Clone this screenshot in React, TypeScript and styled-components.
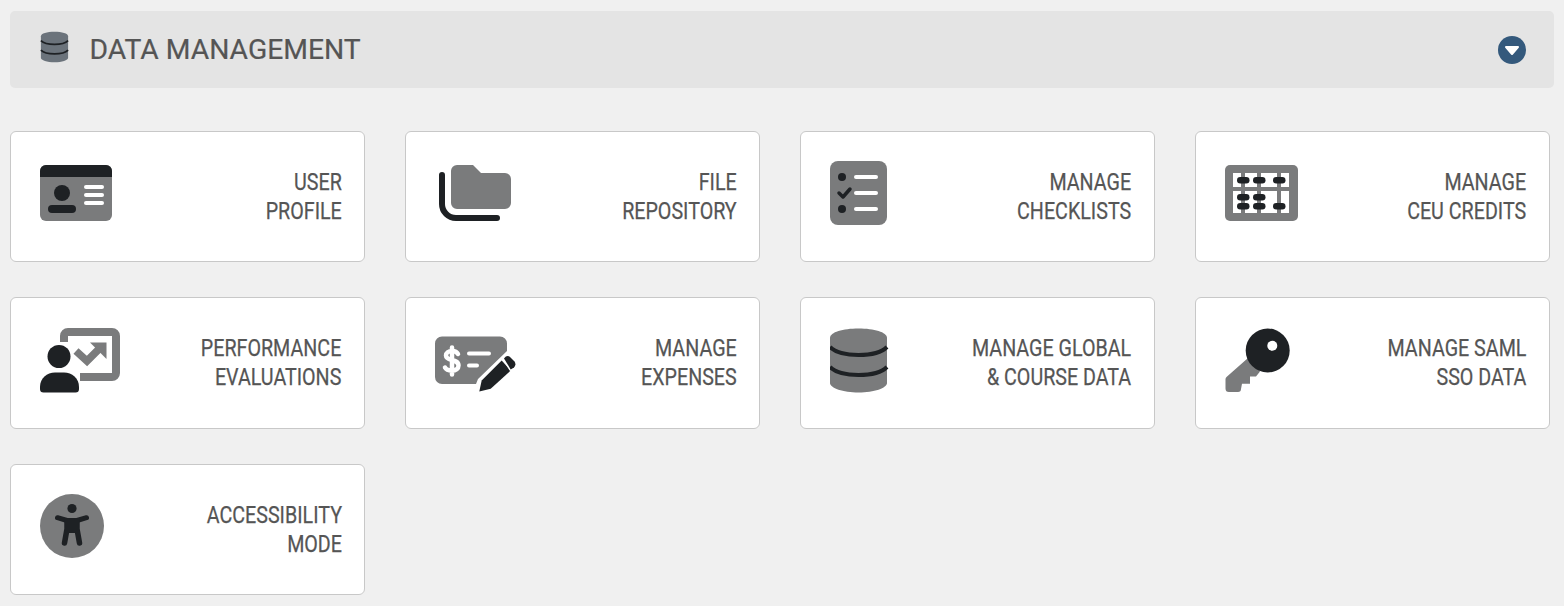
import React from "react";
import styled, { createGlobalStyle } from "styled-components";

const GREY = "#7a7b7c";
const DARK = "#1e2124";

const GlobalStyle = createGlobalStyle`
  html, body {
    margin: 0;
    padding: 0;
    background: #f0f0f0;
    font-family: Roboto, "Liberation Sans", sans-serif;
  }
`;

const Page = styled.div`
  padding: 11px 10px 0;
`;

const Header = styled.header`
  display: flex;
  align-items: center;
  height: 77px;
  padding: 0 28px 0 30px;
  border-radius: 5px;
  background: #e4e4e4;
`;

const HeaderIcon = styled.svg`
  width: 29px;
  height: 32px;
  margin-right: 20.5px;
  margin-top: -5px;
`;

const Title = styled.h1`
  flex: 1;
  margin: 0;
  font-size: 28.3px;
  font-weight: 400;
  color: #555;
  -webkit-text-stroke: 0.2px #555;
`;

const Toggle = styled.svg`
  width: 28px;
  height: 28px;
`;

const Grid = styled.div`
  display: grid;
  grid-template-columns: repeat(4, 355px);
  grid-auto-rows: 131.3px;
  column-gap: 40px;
  row-gap: 35.2px;
  margin-top: 42.9px;
`;

const Card = styled.a`
  display: flex;
  align-items: center;
  justify-content: space-between;
  box-sizing: border-box;
  padding: 0 22.5px 0 29px;
  border: 1px solid #c8c8c8;
  border-radius: 6px;
  background: #fff;
`;

const Icon = styled.svg`
  width: 90px;
  height: 73px;
  flex: none;
`;

const Label = styled.div`
  font-size: 24px;
  line-height: 29px;
  color: #555;
  -webkit-text-stroke: 0.25px #555;
  text-align: right;
  white-space: nowrap;
  transform: scaleX(0.82);
  transform-origin: right center;
`;

const cylinder = "M0 11C0 5 13 1.5 28.5 1.5S57 5 57 11V56C57 61 44 65.5 28.5 65.5S0 61 0 56Z";
const bandTop = "M0 20C6 26 16 28 28.5 28S51 26 57 20";
const bandLow = "M0 40C6 46 16 48 28.5 48S51 46 57 40";

const UserProfileIcon = () => (
  <Icon viewBox="0 0 90 73">
    <rect x="0" y="5" width="72" height="56" rx="6" fill={GREY} />
    <path d="M0 17V11a6 6 0 0 1 6-6H66a6 6 0 0 1 6 6V17Z" fill={DARK} />
    <circle cx="22" cy="33" r="8" fill={DARK} />
    <rect x="8" y="45" width="28" height="8" rx="4" fill={DARK} />
    <rect x="44" y="25" width="20" height="4" rx="2" fill="#fff" />
    <rect x="44" y="33" width="20" height="4" rx="2" fill="#fff" />
    <rect x="44" y="41" width="20" height="4" rx="2" fill="#fff" />
  </Icon>
);

const FileRepositoryIcon = () => (
  <Icon viewBox="0 0 90 73">
    <path d="M16 11a6 6 0 0 1 6-6H38L46 13H70a6 6 0 0 1 6 6V43a6 6 0 0 1-6 6H22a6 6 0 0 1-6-6Z" fill={GREY} />
    <path d="M7 15V44a14 14 0 0 0 14 14H62" fill="none" stroke={DARK} strokeWidth="6" strokeLinecap="round" />
  </Icon>
);

const ChecklistsIcon = () => (
  <Icon viewBox="0 0 90 73">
    <rect x="0" y="1" width="57" height="64" rx="8" fill={GREY} />
    <circle cx="12" cy="17" r="4" fill={DARK} />
    <path d="M9 33L13 37L20 29" fill="none" stroke={DARK} strokeWidth="3.5" strokeLinecap="round" strokeLinejoin="round" />
    <circle cx="12" cy="49" r="4" fill={DARK} />
    <rect x="24" y="15" width="24" height="4" rx="2" fill="#fff" />
    <rect x="24" y="31" width="24" height="4" rx="2" fill="#fff" />
    <rect x="24" y="47" width="24" height="4" rx="2" fill="#fff" />
  </Icon>
);

const CeuCreditsIcon = () => (
  <Icon viewBox="0 0 90 73">
    <rect x="0" y="5" width="73" height="56" rx="5" fill={GREY} />
    <rect x="8" y="13" width="56" height="14" fill="#fff" />
    <rect x="8" y="31" width="56" height="22" fill="#fff" />
    <path d="M16 13h4v14h-4ZM32 13h4v14h-4ZM52 13h4v14h-4ZM16 31h4v22h-4ZM32 31h4v22h-4ZM52 31h4v22h-4Z" fill={GREY} />
    <rect x="12" y="17" width="12.5" height="6.5" rx="3.25" fill={DARK} />
    <rect x="28" y="17" width="12.5" height="6.5" rx="3.25" fill={DARK} />
    <rect x="48" y="17" width="12.5" height="6.5" rx="3.25" fill={DARK} />
    <rect x="12" y="34" width="12.5" height="6.5" rx="3.25" fill={DARK} />
    <rect x="28" y="34" width="12.5" height="6.5" rx="3.25" fill={DARK} />
    <rect x="12" y="43" width="12.5" height="6.5" rx="3.25" fill={DARK} />
    <rect x="28" y="43" width="12.5" height="6.5" rx="3.25" fill={DARK} />
    <rect x="48" y="43" width="12.5" height="6.5" rx="3.25" fill={DARK} />
  </Icon>
);

const EvaluationsIcon = () => (
  <Icon viewBox="0 0 90 73">
    <path d="M24 15V9a4 4 0 0 1 4-4H72a4 4 0 0 1 4 4V46a4 4 0 0 1-4 4H40" fill="none" stroke={GREY} strokeWidth="8" />
    <path d="M36 24L47 34L60 21" fill="none" stroke={GREY} strokeWidth="7.5" />
    <path d="M50 15.5H66.5V32Z" fill={GREY} />
    <circle cx="19" cy="29.5" r="11.5" fill={DARK} stroke="#fff" strokeWidth="2" paintOrder="stroke" />
    <path d="M0 60C0 51 7 45.5 15 45.5H24C32 45.5 39 51 39 60V62a3.5 3.5 0 0 1-3.5 3.5H3.5A3.5 3.5 0 0 1 0 62Z" fill={DARK} />
  </Icon>
);

const ExpensesIcon = () => (
  <Icon viewBox="0 0 90 73">
    <path d="M7 9.5H65a7 7 0 0 1 7 7V24L43 52L41 57H7a7 7 0 0 1-7-7V16.5a7 7 0 0 1 7-7Z" fill={GREY} />
    <path
      d="M23 27C22 25 20 24 17 24C13.5 24 11 26 11 28.5C11 34.5 23.5 31.5 23.5 38.5C23.5 41.5 21 43.5 17 43.5C13.5 43.5 11 42.5 10 40.5M17 20.5V47.5"
      fill="none"
      stroke="#fff"
      strokeWidth="4.5"
      strokeLinecap="round"
    />
    <rect x="32" y="24.5" width="24" height="4" rx="2" fill="#fff" />
    <rect x="32" y="36.5" width="12" height="4" rx="2" fill="#fff" />
    <g fill={DARK} stroke="#fff" strokeWidth="3" paintOrder="stroke" strokeLinejoin="round">
      <path d="M44.3 64.5L46.7 53.5L66.7 33.5L75.7 43.5L55.7 61.8Z" />
      <path d="M69 31.5Q72 27.5 75 30L79.5 34.5Q81.5 37.5 79 40.5L75.7 42.5Z" />
    </g>
  </Icon>
);

const GlobalDataIcon = () => (
  <Icon viewBox="0 0 90 73">
    <path d={cylinder} fill={GREY} />
    <path d={bandTop} fill="none" stroke={DARK} strokeWidth="4" />
    <path d={bandLow} fill="none" stroke={DARK} strokeWidth="4" />
  </Icon>
);

const SamlKeyIcon = () => (
  <Icon viewBox="0 0 90 73">
    <path
      d="M23.3 30.8L35 44.5L31 49.5H25V56.8H17L16 62a3 3 0 0 1-3 3H4a3.5 3.5 0 0 1-3.5-3.5V52a3 3 0 0 1 1-2Z"
      fill={GREY}
    />
    <circle cx="42.7" cy="23.5" r="22" fill={DARK} />
    <circle cx="47.3" cy="18.8" r="5" fill="#fff" />
  </Icon>
);

const AccessibilityIcon = () => (
  <Icon viewBox="0 0 90 73">
    <circle cx="32" cy="33" r="32" fill={GREY} />
    <circle cx="32" cy="15.5" r="4.6" fill={DARK} />
    <path d="M17.5 24.7L27 27.5H37L46.5 24.7" fill="none" stroke={DARK} strokeWidth="5" strokeLinecap="round" strokeLinejoin="round" />
    <path d="M27 28V36L24.5 50M37 28V36L39.5 50" fill="none" stroke={DARK} strokeWidth="5.5" strokeLinecap="round" strokeLinejoin="round" />
    <path d="M27 27H37V40H27Z" fill={DARK} />
  </Icon>
);

const items: { icon: React.FC; lines: [string, string] }[] = [
  { icon: UserProfileIcon, lines: ["USER", "PROFILE"] },
  { icon: FileRepositoryIcon, lines: ["FILE", "REPOSITORY"] },
  { icon: ChecklistsIcon, lines: ["MANAGE", "CHECKLISTS"] },
  { icon: CeuCreditsIcon, lines: ["MANAGE", "CEU CREDITS"] },
  { icon: EvaluationsIcon, lines: ["PERFORMANCE", "EVALUATIONS"] },
  { icon: ExpensesIcon, lines: ["MANAGE", "EXPENSES"] },
  { icon: GlobalDataIcon, lines: ["MANAGE GLOBAL", "& COURSE DATA"] },
  { icon: SamlKeyIcon, lines: ["MANAGE SAML", "SSO DATA"] },
  { icon: AccessibilityIcon, lines: ["ACCESSIBILITY", "MODE"] },
];

const App: React.FC = () => {
  return (
    <Page>
      <GlobalStyle />
      <Header>
        <HeaderIcon viewBox="0 0 57 67">
          <path d={cylinder} fill="#6b737b" />
          <path d={bandTop} fill="none" stroke={DARK} strokeWidth="3.5" />
          <path d={bandLow} fill="none" stroke={DARK} strokeWidth="3.5" />
        </HeaderIcon>
        <Title>DATA MANAGEMENT</Title>
        <Toggle viewBox="0 0 28 28">
          <circle cx="14" cy="14" r="14" fill="#34597c" />
          <path d="M8 11H20L14 18Z" fill="#fff" stroke="#fff" strokeWidth="2" strokeLinejoin="round" />
        </Toggle>
      </Header>
      <Grid>
        {items.map(({ icon: ItemIcon, lines }) => (
          <Card key={lines.join(" ")}>
            <ItemIcon />
            <Label>
              {lines[0]}
              <br />
              {lines[1]}
            </Label>
          </Card>
        ))}
      </Grid>
    </Page>
  );
};

export default App;
